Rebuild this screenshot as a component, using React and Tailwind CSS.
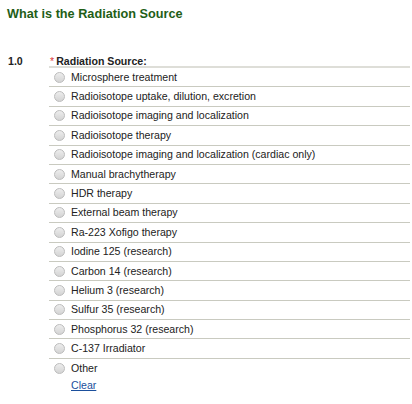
import React, { useState } from "react";

const options = [
  "Microsphere treatment",
  "Radioisotope uptake, dilution, excretion",
  "Radioisotope imaging and localization",
  "Radioisotope therapy",
  "Radioisotope imaging and localization (cardiac only)",
  "Manual brachytherapy",
  "HDR therapy",
  "External beam therapy",
  "Ra-223 Xofigo therapy",
  "Iodine 125 (research)",
  "Carbon 14 (research)",
  "Helium 3 (research)",
  "Sulfur 35 (research)",
  "Phosphorus 32 (research)",
  "C-137 Irradiator",
  "Other",
];

export default function App() {
  const [value, setValue] = useState(null);

  return (
    <div className="w-[412px] h-[404px] bg-white text-[#222] overflow-hidden" style={{ fontFamily: '"Liberation Sans", Arial, sans-serif' }}>
      {/* Section title */}
      <h1 className="pl-[7px] pt-[7px] text-[12.7px] leading-[15px] font-bold text-[#1f5e17]">
        What is the Radiation Source
      </h1>

      <div className="flex mt-[33px]">
        <div className="w-[49px] pl-[8px] text-[10.6px] leading-[13px] font-bold">1.0</div>

        <div className="flex-1 mr-[2px]">
          {/* Question label */}
          <div className="h-[11px] pl-[1px] text-[10.6px] leading-[13px] font-bold">
            <span className="text-[#d33] font-normal mr-[2px]">*</span>
            Radiation Source:
          </div>
          <div className="border-t-2 border-[#deded8]">
            {options.map((opt, i) => (
              <label
                key={opt}
                className={`flex items-center h-[19.4px] box-border cursor-pointer ${i < options.length - 1 ? "border-b border-[#c9cac0]" : ""}`}
              >
                <span className="ml-[5px] w-[11px] h-[11px] rounded-full border border-[#bcbcbc] bg-gradient-to-b from-[#ededed] to-[#d4d4d4] flex items-center justify-center shrink-0">
                  {value === opt && <span className="w-[5px] h-[5px] rounded-full bg-[#444]" />}
                </span>
                <input type="radio" name="src" className="hidden" checked={value === opt} onChange={() => setValue(opt)} />
                <span className="ml-[6px] text-[10.6px] leading-[13px]">{opt}</span>
              </label>
            ))}
            <button onClick={() => setValue(null)} className="block ml-[22px] mt-[1px] text-[10.6px] leading-[13px] text-[#1b4f9c] underline">
              Clear
            </button>
          </div>
        </div>
      </div>
    </div>
  );
}
